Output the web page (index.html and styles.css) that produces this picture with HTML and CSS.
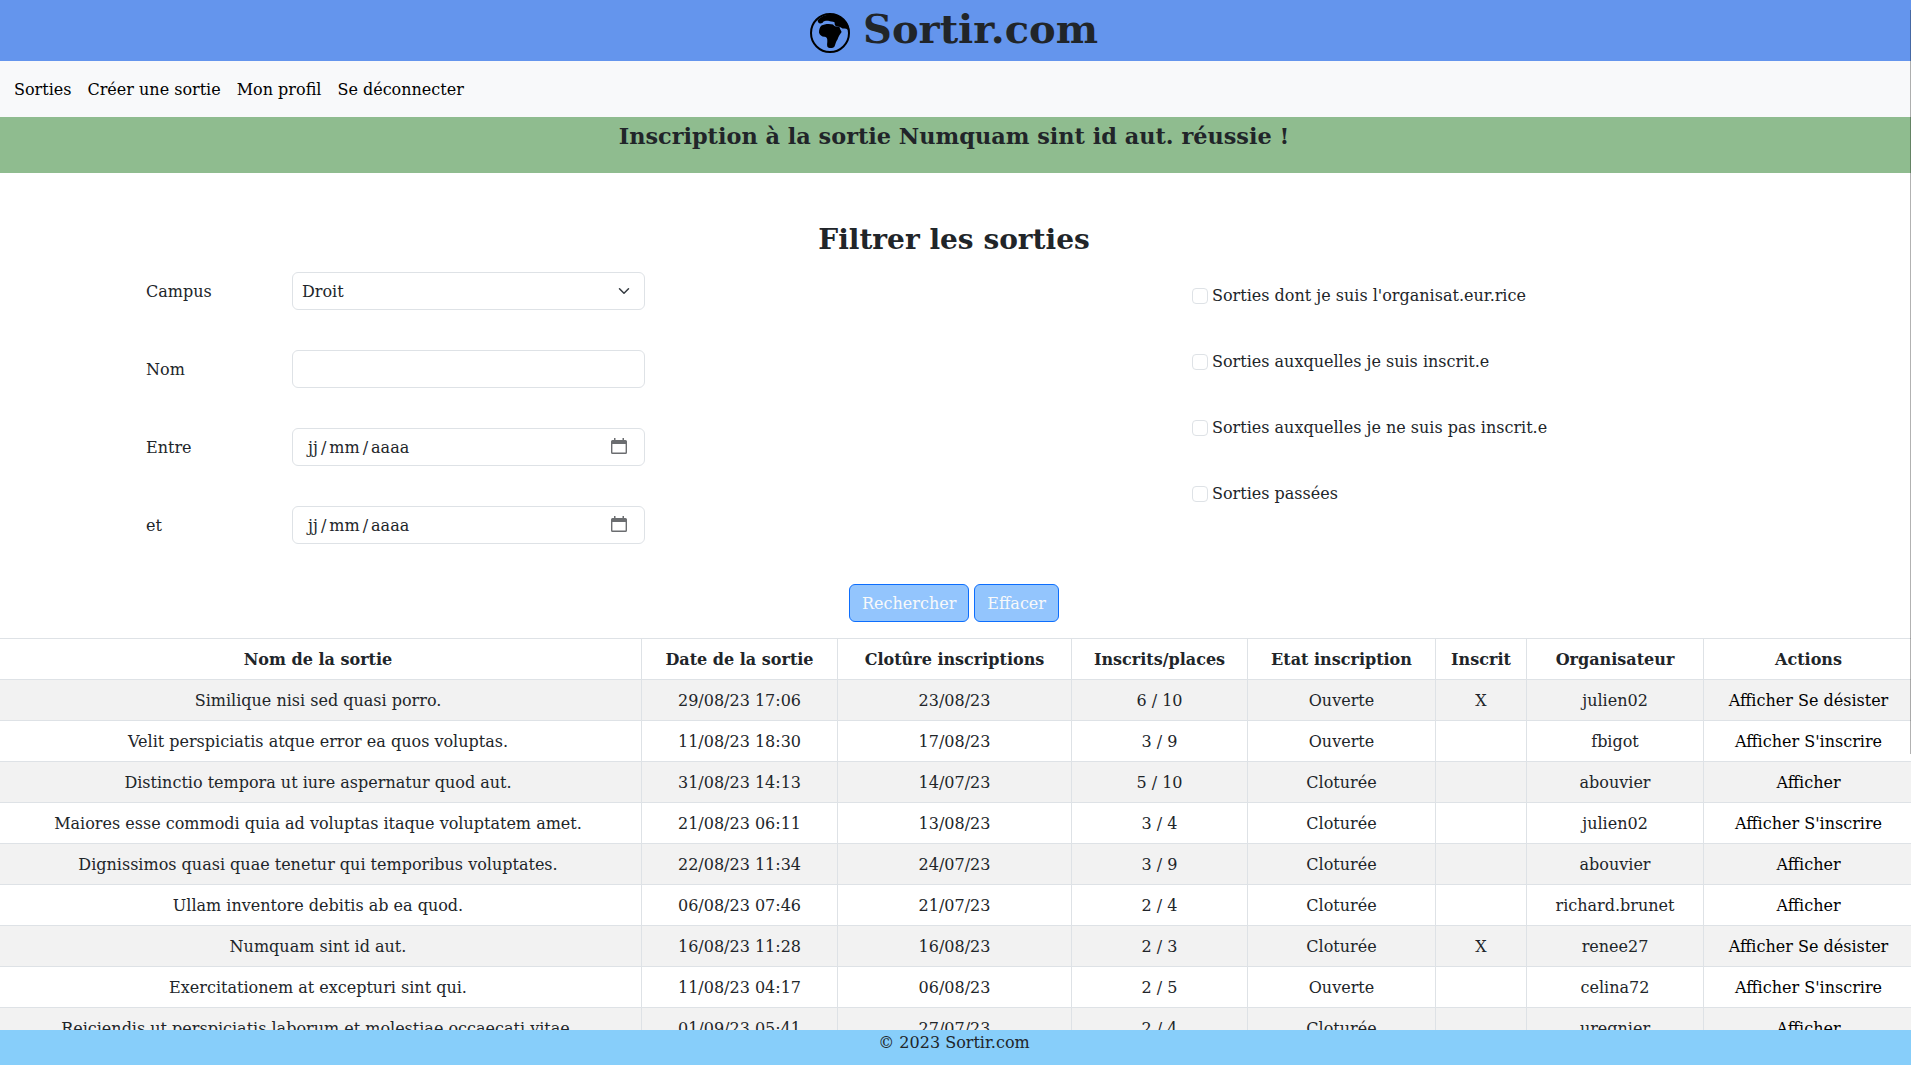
FILE: index.html
```html
<!DOCTYPE html>
<html lang="fr">
<head>
<meta charset="utf-8">
<title>Sortir.com</title>
<link rel="stylesheet" href="styles.css">
</head>
<body>
<div class="page">
  <header class="brand">
    <svg class="globe" viewBox="0 0 40 40">
      <circle cx="20" cy="20" r="19" fill="none" stroke="#000" stroke-width="2"/>
      <path d="M7.500 7.500C12 2 20 0 27 2C35 5 40 12 39.500 20C39 17.500 37 15.500 34.500 15.500C32.500 16 31.500 14.800 30 14L27.500 13.500C25.500 13.500 25 12 24.500 11C25.500 9.500 24 8.500 21 8.600C19 7.500 15 7.500 13.500 8.500C13 10.500 9.500 11 8.500 9.800Z"/>
      <path d="M11.500 12.500C14 10.800 20 10.500 23 11.500C24 12.500 24.500 13.200 26 13.500L29.500 14C30 16 31 17.500 31.600 19C30 21.500 28.300 23.500 27.500 26.500C26 28.500 25.500 31 24.500 33.500C23 35.500 18.500 35.500 17.300 33.500C16.800 31 17.500 29.500 17.300 27.500C17.500 25.500 16.500 24.500 15 23.800C12.500 24.300 9.500 22 9 19.500C9 16.500 9.800 14 11.500 12.500Z"/>
    </svg>
    <h1>Sortir.com</h1>
  </header>
  <nav class="menu">
    <a>Sorties</a><a>Créer une sortie</a><a>Mon profil</a><a>Se déconnecter</a>
  </nav>
  <div class="flash">Inscription à la sortie Numquam sint id aut. réussie !</div>
  <main>
    <h2>Filtrer les sorties</h2>
    <form class="filters">
      <div class="fields">
        <div class="field"><label>Campus</label><div class="control">Droit
          <svg class="chevron" viewBox="0 0 16 16"><path d="m2 5 6 6 6-6" fill="none" stroke="#343a40" stroke-width="2" stroke-linecap="round" stroke-linejoin="round"/></svg></div></div>
        <div class="field"><label>Nom</label><div class="control"></div></div>
        <div class="field"><label>Entre</label><div class="control date"><span class="parts"><span>jj</span><span>/</span><span>mm</span><span>/</span><span>aaaa</span></span>
          <svg class="calendar" viewBox="0 0 16 16"><path fill-rule="evenodd" d="M3 0h1.500v2h7V0H13v2h1.500a1.500 1.500 0 0 1 1.500 1.500v11a1.500 1.500 0 0 1-1.500 1.500h-13A1.500 1.500 0 0 1 0 14.500v-11A1.500 1.500 0 0 1 1.500 2H3zM1.400 6v8.600h13.200V6z"/></svg></div></div>
        <div class="field"><label>et</label><div class="control date"><span class="parts"><span>jj</span><span>/</span><span>mm</span><span>/</span><span>aaaa</span></span>
          <svg class="calendar" viewBox="0 0 16 16"><path fill-rule="evenodd" d="M3 0h1.500v2h7V0H13v2h1.500a1.500 1.500 0 0 1 1.500 1.500v11a1.500 1.500 0 0 1-1.500 1.500h-13A1.500 1.500 0 0 1 0 14.500v-11A1.500 1.500 0 0 1 1.500 2H3zM1.400 6v8.600h13.200V6z"/></svg></div></div>
      </div>
      <div class="checks">
        <label><i class="box"></i>Sorties dont je suis l'organisat.eur.rice</label>
        <label><i class="box"></i>Sorties auxquelles je suis inscrit.e</label>
        <label><i class="box"></i>Sorties auxquelles je ne suis pas inscrit.e</label>
        <label><i class="box"></i>Sorties passées</label>
      </div>
    </form>
    <div class="buttons"><a class="btn">Rechercher</a><a class="btn">Effacer</a></div>
    <table class="outings">
      <colgroup><col class="c-name"><col class="c-date"><col class="c-close"><col class="c-places"><col class="c-state"><col class="c-in"><col class="c-host"><col class="c-actions"></colgroup>
      <thead><tr><th>Nom de la sortie</th><th>Date de la sortie</th><th>Clotûre inscriptions</th><th>Inscrits/places</th><th>Etat inscription</th><th>Inscrit</th><th>Organisateur</th><th>Actions</th></tr></thead>
      <tbody>
        <tr><td>Similique nisi sed quasi porro.</td><td>29/08/23 17:06</td><td>23/08/23</td><td>6 / 10</td><td>Ouverte</td><td>X</td><td>julien02</td><td><a>Afficher</a> <a>Se désister</a></td></tr>
        <tr><td>Velit perspiciatis atque error ea quos voluptas.</td><td>11/08/23 18:30</td><td>17/08/23</td><td>3 / 9</td><td>Ouverte</td><td></td><td>fbigot</td><td><a>Afficher</a> <a>S'inscrire</a></td></tr>
        <tr><td>Distinctio tempora ut iure aspernatur quod aut.</td><td>31/08/23 14:13</td><td>14/07/23</td><td>5 / 10</td><td>Cloturée</td><td></td><td>abouvier</td><td><a>Afficher</a></td></tr>
        <tr><td>Maiores esse commodi quia ad voluptas itaque voluptatem amet.</td><td>21/08/23 06:11</td><td>13/08/23</td><td>3 / 4</td><td>Cloturée</td><td></td><td>julien02</td><td><a>Afficher</a> <a>S'inscrire</a></td></tr>
        <tr><td>Dignissimos quasi quae tenetur qui temporibus voluptates.</td><td>22/08/23 11:34</td><td>24/07/23</td><td>3 / 9</td><td>Cloturée</td><td></td><td>abouvier</td><td><a>Afficher</a></td></tr>
        <tr><td>Ullam inventore debitis ab ea quod.</td><td>06/08/23 07:46</td><td>21/07/23</td><td>2 / 4</td><td>Cloturée</td><td></td><td>richard.brunet</td><td><a>Afficher</a></td></tr>
        <tr><td>Numquam sint id aut.</td><td>16/08/23 11:28</td><td>16/08/23</td><td>2 / 3</td><td>Cloturée</td><td>X</td><td>renee27</td><td><a>Afficher</a> <a>Se désister</a></td></tr>
        <tr><td>Exercitationem at excepturi sint qui.</td><td>11/08/23 04:17</td><td>06/08/23</td><td>2 / 5</td><td>Ouverte</td><td></td><td>celina72</td><td><a>Afficher</a> <a>S'inscrire</a></td></tr>
        <tr><td>Reiciendis ut perspiciatis laborum et molestiae occaecati vitae.</td><td>01/09/23 05:41</td><td>27/07/23</td><td>2 / 4</td><td>Cloturée</td><td></td><td>uregnier</td><td><a>Afficher</a></td></tr>
      </tbody>
    </table>
  </main>
</div>
<footer class="footer">© 2023 Sortir.com</footer>
<div class="scroll-thumb"></div>
</body>
</html>
```
FILE: styles.css
```css
*, *::before, *::after { box-sizing: border-box; }
html, body { height: 100%; overflow: hidden; }
body {
  margin: 0;
  background: #fff;
  color: #212529;
  font: 16px/24px "DejaVu Serif", serif;
}
h1, h2 { margin: 0; font-weight: 700; line-height: 1.2; }
.page { width: 1920px; margin-left: -6px; }
.brand {
  height: 61px;
  display: flex;
  justify-content: center;
  gap: 13px;
  background: cornflowerblue;
}
.brand h1 { font-size: 40px; padding-top: 5px; }
.globe { width: 40px; height: 40px; margin-top: 13px; }
.menu {
  height: 56px;
  display: flex;
  align-items: center;
  gap: 16px;
  padding: 2px 0 0 20px;
  background: #f8f9fa;
  color: #000;
}
.flash {
  height: 56px;
  padding-top: 6px;
  background: darkseagreen;
  text-align: center;
  font-size: 22.4px;
  line-height: 26px;
  font-weight: 700;
}
h2 { margin-top: 50px; text-align: center; font-size: 28px; line-height: 34px; }
.filters { display: flex; padding: 15px 0 0 152px; }
.fields { width: 1046px; display: grid; gap: 40px; }
.field { display: flex; align-items: center; }
.field label { width: 146px; padding-top: 2px; }
.control {
  width: 353px;
  height: 38px;
  display: flex;
  align-items: center;
  justify-content: space-between;
  padding: 2px 12px 0 9px;
  border: 1px solid #dee2e6;
  border-radius: 6px;
}
.date { padding: 2px 17px 0 15px; }
.parts { display: flex; gap: 3px; }
.chevron { width: 16px; height: 12px; margin-top: -2px; }
.calendar { width: 16px; height: 16px; fill: #6b6d70; margin-top: -5px; }
.checks { padding-top: 12px; display: grid; gap: 42px; align-content: start; }
.checks label { display: flex; align-items: center; gap: 4px; }
.box { width: 16px; height: 16px; border: 1px solid #dee2e6; border-radius: 4px; }
.buttons { display: flex; justify-content: center; gap: 5px; padding: 40px 0 16px; }
.btn {
  height: 38px;
  padding: 7px 12px 5px;
  border: 1px solid #0d6efd;
  border-radius: 6px;
  background: #93c5fd;
  color: #f8f9fa;
}
.outings { width: 1920px; table-layout: fixed; border-collapse: collapse; text-align: center; }
.c-name { width: 647px; }
.c-date { width: 196px; }
.c-close { width: 234px; }
.c-places { width: 176px; }
.c-state { width: 188px; }
.c-in { width: 91px; }
.c-host { width: 177px; }
.outings th, .outings td {
  height: 41px;
  padding: 9px 8px 7px;
  border: 1px solid #dee2e6;
  white-space: nowrap;
}
.outings tbody tr:nth-child(odd) { background: #f2f2f2; }
.outings a { color: #000; }
.footer {
  position: fixed;
  inset: auto 0 0;
  height: 35px;
  padding: 1px 3px 0 0;
  background: lightskyblue;
  text-align: center;
}
.scroll-thumb {
  position: fixed;
  top: 10px;
  right: 0;
  width: 1px;
  height: 744px;
  background: rgb(0 0 0 / 30%);
}
```
